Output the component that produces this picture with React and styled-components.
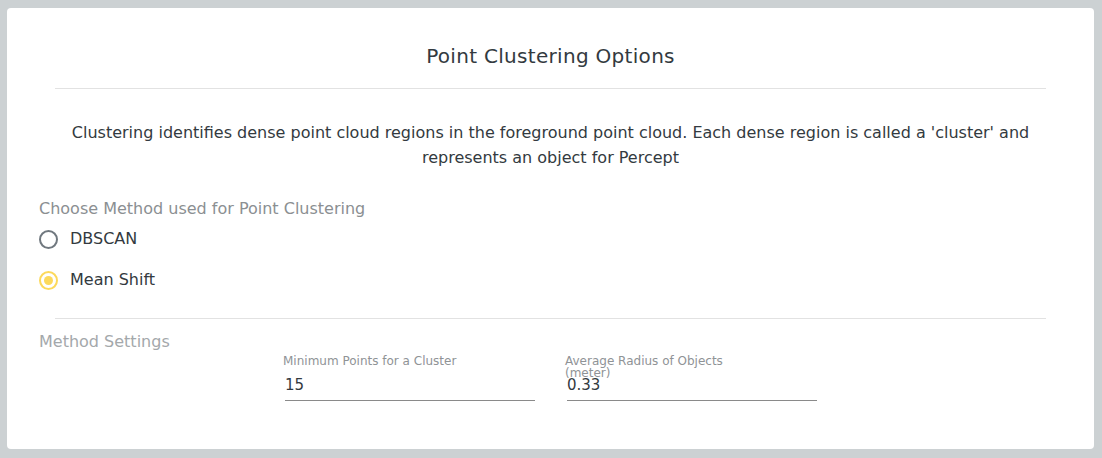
import React, { useState } from 'react';
import styled, { createGlobalStyle } from 'styled-components';

const GlobalStyle = createGlobalStyle`
	html, body {
		margin: 0;
		padding: 0;
		background-color: #ccd1d3;
		font-family: 'DejaVu Sans', 'Open Sans', sans-serif;
	}
`;

const Page = styled.div`
	padding: 8px 8px 9px 7px;
	box-sizing: border-box;
	height: 458px;
`;

const Card = styled.div`
	background-color: white;
	border-radius: 4px;
	height: 441px;
	box-sizing: border-box;
	padding: 0 32px;
	display: flex;
	flex-direction: column;
`;

const Title = styled.div`
	font-size: 20px;
	color: #333a40;
	text-align: center;
	line-height: 24px;
	padding-top: 36px;
	padding-bottom: 20px;
	letter-spacing: 0.3px;
`;

const Divider = styled.hr`
	border: none;
	border-top: 1px solid #e2e2e2;
	margin: 0 16px 0 16px;
`;

const Description = styled.p`
	font-size: 16px;
	line-height: 25px;
	color: #333a40;
	text-align: center;
	margin: 31px 0 0 0;
`;

const SectionLabel = styled.div`
	font-size: 16px;
	color: ${(p) => (p.$light ? '#a4a8ab' : '#8b8f92')};
	line-height: 20px;
	margin-top: ${(p) => p.$top || 0}px;
`;

const RadioGroup = styled.div`
	display: flex;
	flex-direction: column;
	gap: 21px;
	margin-top: 10px;
	margin-bottom: 28px;
`;

const RadioRow = styled.label`
	display: flex;
	align-items: center;
	gap: 12px;
	font-size: 16px;
	color: #333a40;
	line-height: 20px;
	cursor: pointer;
`;

const RadioCircle = styled.span`
	width: 19px;
	height: 19px;
	box-sizing: border-box;
	border-radius: 50%;
	border: 2px solid ${(p) => (p.$checked ? '#fcd95b' : '#70787f')};
	display: flex;
	align-items: center;
	justify-content: center;

	&::after {
		content: '';
		width: 9px;
		height: 9px;
		border-radius: 50%;
		background-color: #fcd95b;
		display: ${(p) => (p.$checked ? 'block' : 'none')};
	}
`;

const Fields = styled.div`
	display: flex;
	gap: 32px;
	padding-left: 246px;
	margin-top: 3px;
`;

const Field = styled.div`
	width: 250px;
	display: flex;
	flex-direction: column;
`;

const FieldLabel = styled.div`
	font-size: 12px;
	line-height: 12px;
	color: #8f9396;
	height: 14px;
	margin-left: -2px;
	white-space: pre-line;
`;

const FieldInput = styled.input`
	border: none;
	border-bottom: 1px solid #8a8a8a;
	outline: none;
	font-family: inherit;
	font-size: 15px;
	color: #333a40;
	padding: 2px 0 6px 0;
	margin-top: 5px;
	background: transparent;
	width: 100%;
`;

const methods = ['DBSCAN', 'Mean Shift'];

const App = () => {
	const [method, setMethod] = useState('Mean Shift');

	return (
		<>
			<GlobalStyle />
			<Page>
				<Card>
					<Title>Point Clustering Options</Title>
					<Divider />
					<Description>
						Clustering identifies dense point cloud regions in the foreground point cloud. Each dense region is called a 'cluster' and
						<br />
						represents an object for Percept
					</Description>
					<SectionLabel $top={29}>Choose Method used for Point Clustering</SectionLabel>
					<RadioGroup>
						{methods.map((m) => (
							<RadioRow key={m} onClick={() => setMethod(m)}>
								<RadioCircle $checked={method === m} />
								{m}
							</RadioRow>
						))}
					</RadioGroup>
					<Divider />
					<SectionLabel $light $top={13}>Method Settings</SectionLabel>
					<Fields>
						<Field>
							<FieldLabel>Minimum Points for a Cluster</FieldLabel>
							<FieldInput defaultValue="15" />
						</Field>
						<Field>
							<FieldLabel>{'Average Radius of Objects\n(meter)'}</FieldLabel>
							<FieldInput defaultValue="0.33" />
						</Field>
					</Fields>
				</Card>
			</Page>
		</>
	);
};

export default App;
